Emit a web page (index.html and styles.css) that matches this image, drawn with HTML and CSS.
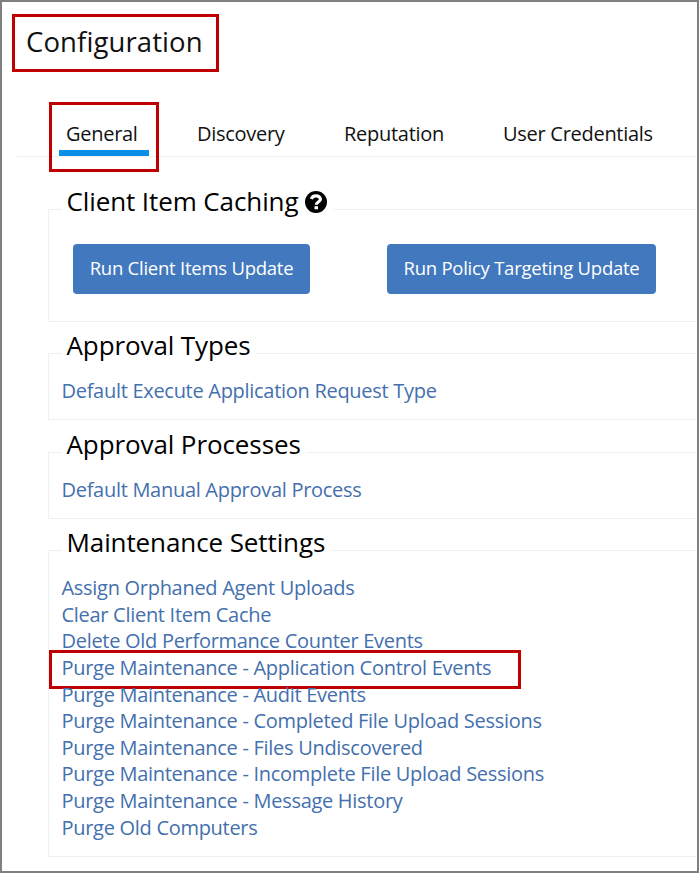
FILE: index.html
```html
<!DOCTYPE html>
<html lang="en">
<head>
<meta charset="utf-8">
<title>Configuration</title>
<link rel="stylesheet" href="styles.css">
</head>
<body>
<main class="page">
  <h1 class="title"><span>Configuration</span></h1>
  <nav class="tabs">
    <a class="tab tab-active"><span>General</span></a>
    <a class="tab"><span>Discovery</span></a>
    <a class="tab"><span>Reputation</span></a>
    <a class="tab"><span>User Credentials</span></a>
  </nav>
  <div class="sections">
    <section class="group group-caching">
      <h2 class="legend"><span>Client Item Caching</span>
        <svg class="help" viewBox="0 0 22 22"><circle cx="11" cy="11" r="11"/><path d="M6.4 8C7 5.6 8.8 4.8 11 4.8c2.6 0 4.4 1.4 4.4 3.4 0 2.9-4.1 2.7-4.1 5.5" fill="none" stroke="#fff" stroke-width="3.2"/><rect x="9.5" y="15.2" width="3.5" height="3.1" fill="#fff"/></svg>
      </h2>
      <div class="buttons">
        <button class="btn btn-items"><span>Run Client Items Update</span></button>
        <button class="btn btn-policy"><span>Run Policy Targeting Update</span></button>
      </div>
    </section>
    <section class="group group-single">
      <h2 class="legend"><span>Approval Types</span></h2>
      <ul class="links"><li><a>Default Execute Application Request Type</a></li></ul>
    </section>
    <section class="group group-single">
      <h2 class="legend"><span>Approval Processes</span></h2>
      <ul class="links"><li><a>Default Manual Approval Process</a></li></ul>
    </section>
    <section class="group group-maintenance">
      <h2 class="legend"><span>Maintenance Settings</span></h2>
      <ul class="links">
        <li><a>Assign Orphaned Agent Uploads</a></li>
        <li><a>Clear Client Item Cache</a></li>
        <li><a>Delete Old Performance Counter Events</a></li>
        <li class="marked"><a>Purge Maintenance - Application Control Events</a></li>
        <li><a>Purge Maintenance - Audit Events</a></li>
        <li><a>Purge Maintenance - Completed File Upload Sessions</a></li>
        <li><a>Purge Maintenance - Files Undiscovered</a></li>
        <li><a>Purge Maintenance - Incomplete File Upload Sessions</a></li>
        <li><a>Purge Maintenance - Message History</a></li>
        <li><a>Purge Old Computers</a></li>
      </ul>
    </section>
  </div>
</main>
</body>
</html>
```
FILE: styles.css
```css
*, *::before, *::after { box-sizing: border-box; }
body { margin: 0; background: #fff; color: #111; font-family: "Open Sans", sans-serif; }
.page { height: 873px; border: 2px solid #808080; overflow: hidden; }
.title {
  width: 207px; height: 58px; margin: 12px 0 0 10px; padding-left: 11px;
  border: 3px solid #c00000; font-size: 27.5px; font-weight: 400; line-height: 50px; letter-spacing: 0.1px;
}
.tabs {
  position: relative; display: grid; grid-template-columns: 131px 147px 159px 1fr;
  height: 55px; margin: 30px 0 0 15px; padding-left: 49px;
  border-bottom: 1px solid #ecf1f4; font-size: 20px; line-height: 64px; letter-spacing: -0.28px;
}
.tab { white-space: nowrap; }
.tab-active::before {
  content: ""; position: absolute; left: 32px; top: 0; width: 110px; height: 70px;
  border: 3px solid #c00000;
}
.tab-active::after {
  content: ""; position: absolute; left: 42px; top: 48px; width: 90px; height: 6px; background: #0a8fe8;
}
.sections { display: grid; gap: 31px; margin: 52px 0 0 46px; }
.group { border: 1px solid #ecf1f5; border-right: 0; }
.group-caching { height: 113px; }
.group-single { height: 67px; }
.group-single + .group-single { margin-top: 1px; }
.group-maintenance { height: 307px; }
.legend {
  display: flex; align-items: center; width: max-content; height: 36px; margin: -27px 0 0 13px;
  padding: 0 6px 0 4.5px; background: #fff; color: #000; font-size: 26px; font-weight: 400; line-height: 36px;
  letter-spacing: -0.1px;
}
.help { width: 22px; height: 22px; margin-left: 7px; position: relative; top: 1px; }
.buttons { display: flex; gap: 77px; margin: 25px 0 0 24px; }
.btn {
  height: 50px; padding: 0; border: 0; border-radius: 4px; background: #4278be; color: #fff;
  font: 18.5px/48px "Open Sans", sans-serif; letter-spacing: -0.25px; white-space: nowrap;
}
.btn span { display: block; height: 50px; }
.btn-items { width: 237px; }
.btn-policy { width: 269px; }
.links { margin: 15px 0 0 12.5px; padding: 0; list-style: none; color: #4470ad; font-size: 20px; line-height: 26.65px; letter-spacing: -0.29px; }
.links li { position: relative; height: 26.65px; white-space: nowrap; }
.marked::after {
  content: ""; position: absolute; left: -12.5px; top: -5px; width: 472px; height: 39px; border: 3px solid #c00000;
}
```
